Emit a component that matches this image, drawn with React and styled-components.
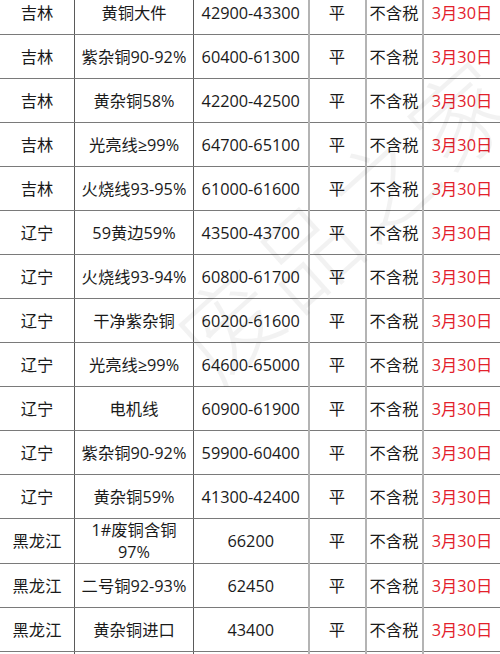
import React from "react";
import styled, { createGlobalStyle } from "styled-components";

const Global = createGlobalStyle`
  html, body { margin: 0; padding: 0; background: #fff; }
  body { font-family: "Open Sans", "Noto Sans CJK SC", sans-serif; }
`;

const Page = styled.div`
  position: relative;
  width: 500px;
  height: 654px;
  overflow: hidden;
  background: #fff;
`;

const Table = styled.table`
  border-collapse: collapse;
  table-layout: fixed;
  width: 501px;
  margin-top: -10px;
  margin-left: -1px;
`;

const Col = styled.col`
  width: ${(p) => p.$w}px;
`;

const Cell = styled.td`
  height: 44px;
  padding: 0 1px;
  text-align: center;
  vertical-align: middle;
  font-family: "Open Sans", "Noto Sans CJK SC", sans-serif;
  font-size: 16.3px;
  line-height: 22px;
  color: ${(p) => (p.$red ? "#e3212b" : "#1a1a1a")};
  white-space: pre-line;
  border-top: 1px solid #7a7a7a;
  border-bottom: 1px solid #7a7a7a;
  border-left: ${(p) => (p.$light ? "2px solid #b4b4b4" : "1px solid #5a5a5a")};
  box-sizing: border-box;
`;

const Watermark = styled.div`
  position: absolute;
  left: 140px;
  top: 300px;
  font-family: "Noto Sans CJK SC", sans-serif;
  font-size: 100px;
  font-weight: 300;
  letter-spacing: 4px;
  color: rgba(0, 0, 0, 0.05);
  transform: rotate(-42deg);
  transform-origin: left top;
  white-space: nowrap;
  pointer-events: none;
`;

const rows = [
  ["吉林", "黄铜大件", "42900-43300"],
  ["吉林", "紫杂铜90-92%", "60400-61300"],
  ["吉林", "黄杂铜58%", "42200-42500"],
  ["吉林", "光亮线≥99%", "64700-65100"],
  ["吉林", "火烧线93-95%", "61000-61600"],
  ["辽宁", "59黄边59%", "43500-43700"],
  ["辽宁", "火烧线93-94%", "60800-61700"],
  ["辽宁", "干净紫杂铜", "60200-61600"],
  ["辽宁", "光亮线≥99%", "64600-65000"],
  ["辽宁", "电机线", "60900-61900"],
  ["辽宁", "紫杂铜90-92%", "59900-60400"],
  ["辽宁", "黄杂铜59%", "41300-42400"],
  ["黑龙江", "1#废铜含铜\n97%", "66200"],
  ["黑龙江", "二号铜92-93%", "62450"],
  ["黑龙江", "黄杂铜进口", "43400"],
  ["黑龙江", "2#混黄铜含铁\n5%", "41000"],
];

export default function App() {
  return (
    <>
      <Global />
      <Page>
        <Table>
          <colgroup>
            <Col $w={75} />
            <Col $w={119} />
            <Col $w={115} />
            <Col $w={57} />
            <Col $w={57} />
            <Col $w={78} />
          </colgroup>
          <tbody>
            {rows.map((r, i) => (
              <tr key={i}>
                <Cell>{r[0]}</Cell>
                <Cell>{r[1]}</Cell>
                <Cell>{r[2]}</Cell>
                <Cell $light>平</Cell>
                <Cell $light>不含税</Cell>
                <Cell $light $red>3月30日</Cell>
              </tr>
            ))}
          </tbody>
        </Table>
        <Watermark>废品之家</Watermark>
      </Page>
    </>
  );
}
